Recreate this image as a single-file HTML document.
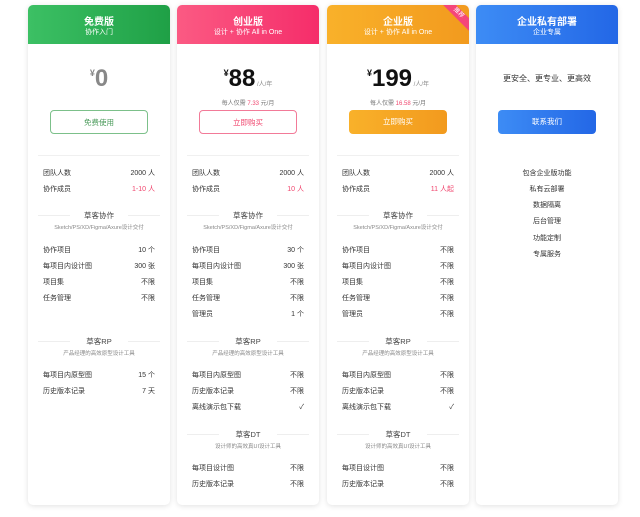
<!DOCTYPE html>
<html><head><meta charset="utf-8"><style>
*{margin:0;padding:0;box-sizing:border-box}
body{width:640px;height:517px;background:#fff;font-family:"Liberation Sans","Noto Sans CJK SC",sans-serif;position:relative;overflow:hidden;color:#333}
.card{position:absolute;top:5px;width:142px;height:500px;background:#fff;border-radius:5px;box-shadow:0 1px 6px rgba(0,0,0,.12);overflow:hidden}
.hd{position:absolute;left:0;top:0;width:100%;height:39px;color:#fff;text-align:center}
.hd .t{position:absolute;top:8px;width:100%;font-size:10px;font-weight:bold}
.hd .s{position:absolute;top:22px;width:100%;font-size:7px}
.a{position:absolute;left:0;width:100%;text-align:center}
.r{position:absolute;left:15px;right:15px;font-size:7px;display:flex;justify-content:space-between;color:#333}
.line{position:absolute;left:10px;right:10px;height:1px;background:#f0f0f0}
.sec{position:absolute;left:10px;right:10px;font-size:7.5px;text-align:center;color:#444}
.sec:before,.sec:after{content:"";position:absolute;top:5px;width:32px;height:1px;background:#eee}
.sec:before{left:0}.sec:after{right:0}
.sub{position:absolute;left:0;width:100%;text-align:center;font-size:5.5px;color:#888}
.btn{position:absolute;left:22px;width:98px;height:24px;top:105px;border-radius:4px;font-size:7.5px;text-align:center;line-height:24px}
.red{color:#f0466e}
</style></head><body>

<!-- card1 -->
<div class="card" style="left:28px">
 <div class="hd" style="background:linear-gradient(90deg,#3cc064,#1fa046)"><div class="t">免费版</div><div class="s">协作入门</div></div>
 <div class="a" style="top:60px;font-size:24px;font-weight:bold;color:#888"><span style="font-size:9px;vertical-align:top;position:relative;top:3px">¥</span>0</div>
 <div class="btn" style="border:1px solid #7cc08a;color:#4a9a5a">免费使用</div>
 <div class="line" style="top:150px"></div>
 <div class="r" style="top:163px"><span>团队人数</span><span>2000 人</span></div>
 <div class="r" style="top:179px"><span>协作成员</span><span class="red">1-10 人</span></div>
 <div class="sec" style="top:205px">草客协作</div>
 <div class="sub" style="top:218px">Sketch/PS/XD/Figma/Axure设计交付</div>
 <div class="r" style="top:240px"><span>协作项目</span><span>10 个</span></div>
 <div class="r" style="top:256px"><span>每项目内设计图</span><span>300 张</span></div>
 <div class="r" style="top:272px"><span>项目集</span><span>不限</span></div>
 <div class="r" style="top:288px"><span>任务管理</span><span>不限</span></div>
 <div class="sec" style="top:331px">草客RP</div>
 <div class="sub" style="top:344px">产品经理的高效原型设计工具</div>
 <div class="r" style="top:365px"><span>每项目内原型图</span><span>15 个</span></div>
 <div class="r" style="top:381px"><span>历史版本记录</span><span>7 天</span></div>
</div>

<!-- card2 -->
<div class="card" style="left:177px">
 <div class="hd" style="background:linear-gradient(90deg,#fb5a83,#f52d6a)"><div class="t">创业版</div><div class="s">设计 + 协作 All in One</div></div>
 <div class="a" style="top:60px;font-size:24px;font-weight:bold;color:#111"><span style="font-size:9px;vertical-align:top;position:relative;top:3px">¥</span>88<span style="font-size:6px;font-weight:normal;color:#888"> /人/年</span></div>
 <div class="a" style="top:93px;font-size:6px;color:#777">每人仅需 <span class="red">7.33</span> 元/月</div>
 <div class="btn" style="border:1px solid #f27a98;color:#f0466e">立即购买</div>
 <div class="line" style="top:150px"></div>
 <div class="r" style="top:163px"><span>团队人数</span><span>2000 人</span></div>
 <div class="r" style="top:179px"><span>协作成员</span><span class="red">10 人</span></div>
 <div class="sec" style="top:205px">草客协作</div>
 <div class="sub" style="top:218px">Sketch/PS/XD/Figma/Axure设计交付</div>
 <div class="r" style="top:240px"><span>协作项目</span><span>30 个</span></div>
 <div class="r" style="top:256px"><span>每项目内设计图</span><span>300 张</span></div>
 <div class="r" style="top:272px"><span>项目集</span><span>不限</span></div>
 <div class="r" style="top:288px"><span>任务管理</span><span>不限</span></div>
 <div class="r" style="top:304px"><span>管理员</span><span>1 个</span></div>
 <div class="sec" style="top:331px">草客RP</div>
 <div class="sub" style="top:344px">产品经理的高效原型设计工具</div>
 <div class="r" style="top:365px"><span>每项目内原型图</span><span>不限</span></div>
 <div class="r" style="top:381px"><span>历史版本记录</span><span>不限</span></div>
 <div class="r" style="top:397px"><span>离线演示包下载</span><span>✓</span></div>
 <div class="sec" style="top:424px">草客DT</div>
 <div class="sub" style="top:437px">设计师的高效真UI设计工具</div>
 <div class="r" style="top:458px"><span>每项目设计图</span><span>不限</span></div>
 <div class="r" style="top:474px"><span>历史版本记录</span><span>不限</span></div>
</div>

<!-- card3 -->
<div class="card" style="left:327px">
 <div class="hd" style="background:linear-gradient(90deg,#f9b12a,#f29a1e)"><div class="t">企业版</div><div class="s">设计 + 协作 All in One</div></div>
 <div style="position:absolute;right:-14px;top:4px;width:50px;height:9px;background:#f5467a;transform:rotate(45deg);color:#fff;font-size:6px;text-align:center;line-height:9px">推荐</div>
 <div class="a" style="top:60px;font-size:24px;font-weight:bold;color:#111"><span style="font-size:9px;vertical-align:top;position:relative;top:3px">¥</span>199<span style="font-size:6px;font-weight:normal;color:#888"> /人/年</span></div>
 <div class="a" style="top:93px;font-size:6px;color:#777">每人仅需 <span class="red">16.58</span> 元/月</div>
 <div class="btn" style="background:linear-gradient(90deg,#f9b12a,#f29a1e);color:#fff">立即购买</div>
 <div class="line" style="top:150px"></div>
 <div class="r" style="top:163px"><span>团队人数</span><span>2000 人</span></div>
 <div class="r" style="top:179px"><span>协作成员</span><span class="red">11 人起</span></div>
 <div class="sec" style="top:205px">草客协作</div>
 <div class="sub" style="top:218px">Sketch/PS/XD/Figma/Axure设计交付</div>
 <div class="r" style="top:240px"><span>协作项目</span><span>不限</span></div>
 <div class="r" style="top:256px"><span>每项目内设计图</span><span>不限</span></div>
 <div class="r" style="top:272px"><span>项目集</span><span>不限</span></div>
 <div class="r" style="top:288px"><span>任务管理</span><span>不限</span></div>
 <div class="r" style="top:304px"><span>管理员</span><span>不限</span></div>
 <div class="sec" style="top:331px">草客RP</div>
 <div class="sub" style="top:344px">产品经理的高效原型设计工具</div>
 <div class="r" style="top:365px"><span>每项目内原型图</span><span>不限</span></div>
 <div class="r" style="top:381px"><span>历史版本记录</span><span>不限</span></div>
 <div class="r" style="top:397px"><span>离线演示包下载</span><span>✓</span></div>
 <div class="sec" style="top:424px">草客DT</div>
 <div class="sub" style="top:437px">设计师的高效真UI设计工具</div>
 <div class="r" style="top:458px"><span>每项目设计图</span><span>不限</span></div>
 <div class="r" style="top:474px"><span>历史版本记录</span><span>不限</span></div>
</div>

<!-- card4 -->
<div class="card" style="left:476px">
 <div class="hd" style="background:linear-gradient(90deg,#3d8cf5,#2367e6)"><div class="t">企业私有部署</div><div class="s">企业专属</div></div>
 <div class="a" style="top:68px;font-size:8px;color:#333">更安全、更专业、更高效</div>
 <div class="btn" style="background:linear-gradient(90deg,#3d8cf5,#2367e6);color:#fff">联系我们</div>
 <div class="a" style="top:163px;font-size:7px">包含企业版功能</div>
 <div class="a" style="top:179px;font-size:7px">私有云部署</div>
 <div class="a" style="top:195px;font-size:7px">数据隔离</div>
 <div class="a" style="top:211px;font-size:7px">后台管理</div>
 <div class="a" style="top:228px;font-size:7px">功能定制</div>
 <div class="a" style="top:244px;font-size:7px">专属服务</div>
</div>
</body></html>
